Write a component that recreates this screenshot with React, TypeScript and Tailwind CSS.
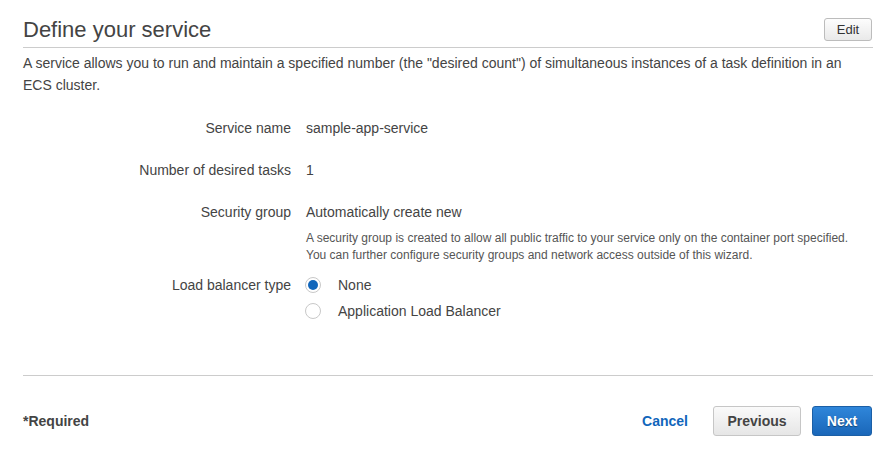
import React from "react";

function Radio({ checked }: { checked: boolean }) {
  return (
    <span className="flex h-[16px] w-[16px] shrink-0 items-center justify-center rounded-full border border-[#c8c8c8] bg-white">
      {checked && <span className="h-[10px] w-[10px] rounded-full bg-[#1166bb]" />}
    </span>
  );
}

export default function App() {
  return (
    <div
      className="h-[452px] w-[892px] bg-white pl-[23px] pr-[19px] text-[#444]"
      style={{ fontFamily: '"Liberation Sans", Arial, sans-serif' }}
    >
      <div className="flex items-start justify-between border-b border-[#cccccc] pt-[16px] pb-[3px]">
        <h1 className="text-[22px] leading-[28px] font-normal text-[#444]">Define your service</h1>
        <button className="mt-[2px] mr-[1px] h-[23px] w-[48px] rounded-[3px] border border-[#bcbcbc] bg-gradient-to-b from-[#fdfdfd] to-[#e9e9e9] text-[13px] leading-[21px] text-[#333]">
          Edit
        </button>
      </div>

      <p className="mt-[4px] text-[14px] leading-[22px]">
        A service allows you to run and maintain a specified number (the "desired count") of simultaneous instances of a task definition in an ECS cluster.
      </p>

      <div className="mt-[22px] flex text-[14px] leading-[20px]">
        <div className="w-[268px] text-right">Service name</div>
        <div className="ml-[15px]">sample-app-service</div>
      </div>

      <div className="mt-[22px] flex text-[14px] leading-[20px]">
        <div className="w-[268px] text-right">Number of desired tasks</div>
        <div className="ml-[15px]">1</div>
      </div>

      <div className="mt-[22px] flex text-[14px] leading-[20px]">
        <div className="w-[268px] text-right">Security group</div>
        <div className="ml-[15px]">
          <div>Automatically create new</div>
          <div className="mt-[8px] text-[12px] leading-[17px] text-[#555]">
            A security group is created to allow all public traffic to your service only on the container port specified.
            <br />
            You can further configure security groups and network access outside of this wizard.
          </div>
        </div>
      </div>

      <div className="mt-[11px] flex text-[14px] leading-[20px]">
        <div className="w-[268px] text-right">Load balancer type</div>
        <div className="ml-[14px] flex flex-col gap-[6px]">
          <label className="flex items-center gap-[17px]">
            <Radio checked />
            <span>None</span>
          </label>
          <label className="flex items-center gap-[17px]">
            <Radio checked={false} />
            <span>Application Load Balancer</span>
          </label>
        </div>
      </div>

      <div className="mt-[54px] border-t border-[#cccccc]" />

      <div className="mt-[30px] flex h-[30px] items-center justify-between">
        <div className="text-[14px] font-bold text-[#444]">*Required</div>
        <div className="mr-[1px] flex items-center">
          <button className="text-[14px] font-bold text-[#1166bb]">Cancel</button>
          <button className="ml-[25px] h-[30px] w-[88px] rounded-[3px] border border-[#c6c6c6] bg-gradient-to-b from-[#fafafa] to-[#e6e6e6] text-[14px] font-bold text-[#444]">
            Previous
          </button>
          <button
            className="ml-[11px] h-[30px] w-[60px] rounded-[3px] border border-[#1b5fa6] bg-gradient-to-b from-[#2f86da] to-[#1a67b9] text-[14px] font-bold text-white"
            style={{ textShadow: "0 1px 1px rgba(0,0,0,0.4)" }}
          >
            Next
          </button>
        </div>
      </div>
    </div>
  );
}
